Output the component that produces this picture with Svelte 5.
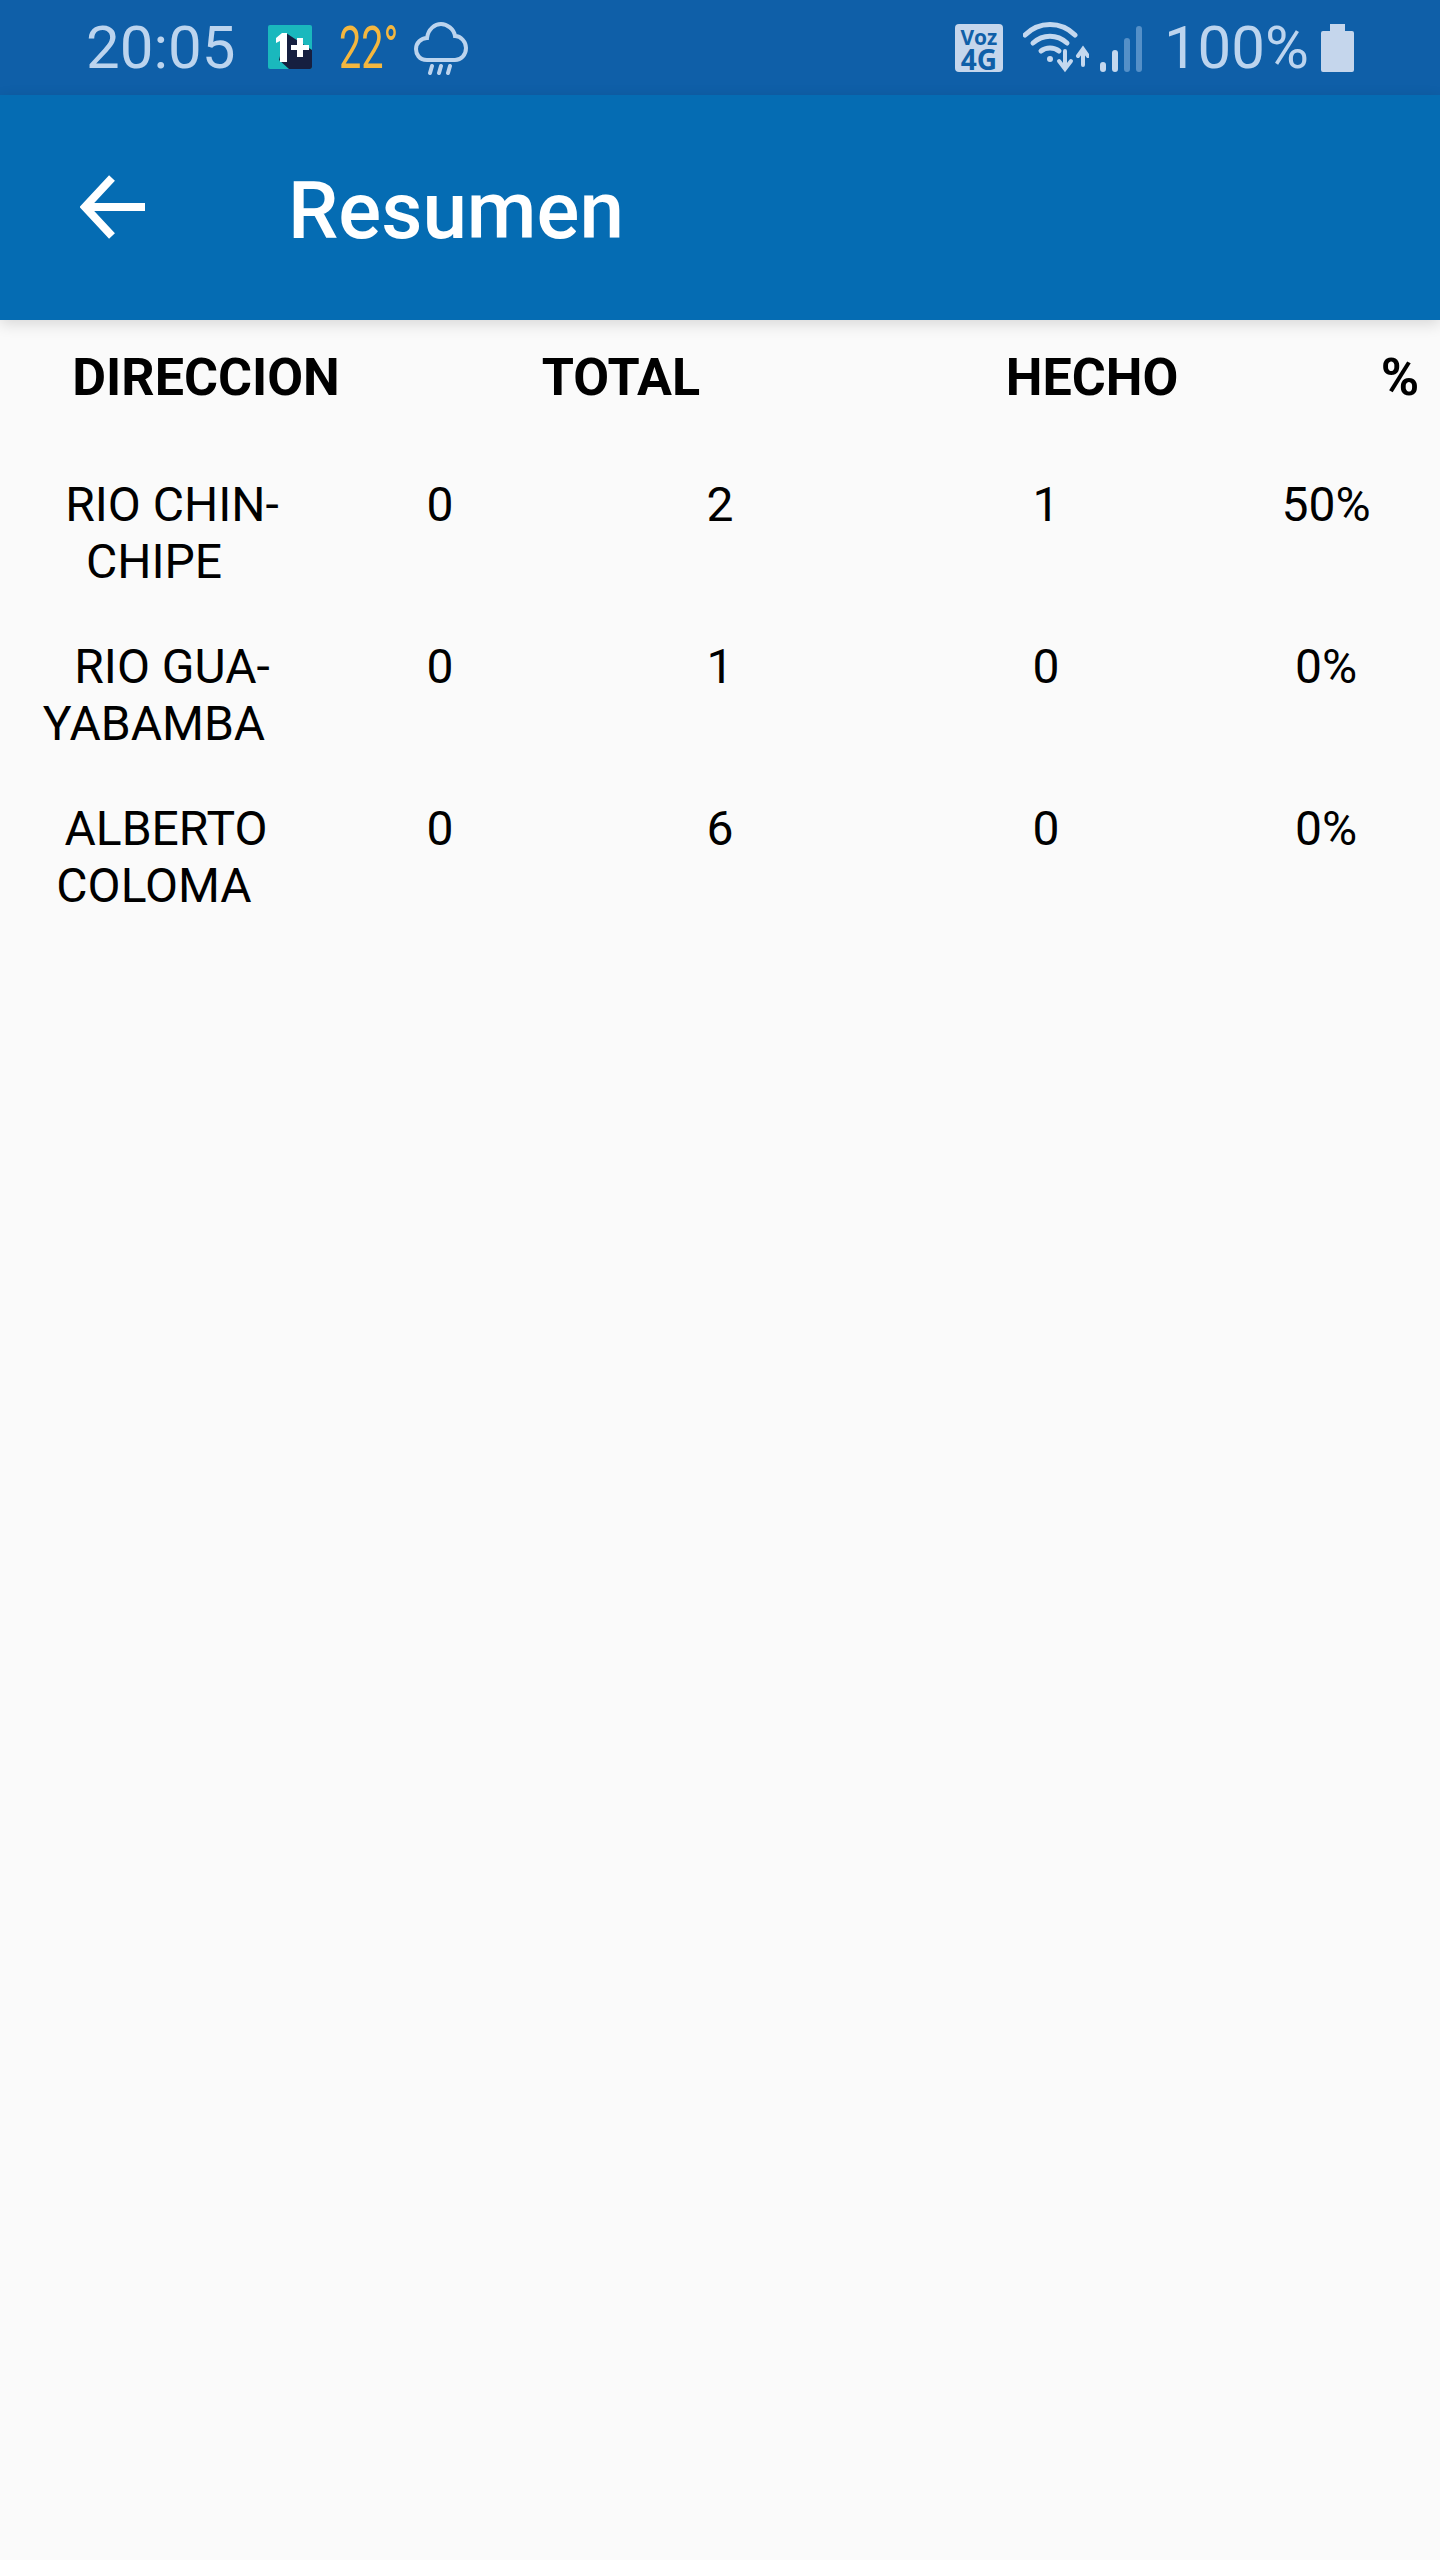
<script>
  const rows = [
    { first: "RIO CHIN-", second: "CHIPE", indent: 36, zero: 0, total: 2, done: 1, pct: "50%" },
    { first: "RIO GUA-", second: "YABAMBA", indent: 36, zero: 0, total: 1, done: 0, pct: "0%" },
    { first: "ALBERTO", second: "COLOMA", indent: 24, zero: 0, total: 6, done: 0, pct: "0%" }
  ];
</script>

<div class="page">
  <div class="status">
    <span class="time">20:05</span>
    <svg class="app-icon" width="44" height="44" viewBox="0 0 44 44">
      <rect width="44" height="44" rx="2" fill="#1ab8bd" />
      <path d="M18 8 L44 25 V42 Q44 44 42 44 H21 L11 35 Z" fill="#161f40" />
      <path d="M8 13 L14 8 H19 V37 H12 V16 L8 18 Z" fill="#fff" />
      <path d="M29 13 H35 V20 H41 V25 H35 V32 H29 V25 H23 V20 H29 Z" fill="#fff" />
    </svg>
    <span class="temp">22°</span>
    <svg class="cloud" width="54" height="54" viewBox="0 0 54 54" fill="none" stroke="#bcd4ee" stroke-width="4" stroke-linecap="round">
      <path d="M13 39 C5 39 2 33 2 28 C2 22 7 17 13 17 C14 8 21 3 27 3 C33 3 40 8 41 15 C47 15 52 21 52 27 C52 34 47 39 41 39 Z" />
      <path d="M18 45 L16 52 M27 45 L25 52 M36 45 L34 52" />
    </svg>

    <div class="spacer"></div>

    <div class="voz"><span>Voz</span><span class="g">4G</span></div>
    <svg class="wifi" width="66" height="52" viewBox="0 0 66 52" fill="none" stroke="#c4d8ef" stroke-linecap="round">
      <path d="M2 13 C16 -1 38 -1 52 13" stroke-width="5" />
      <path d="M10 21 C20 12 34 12 44 21" stroke-width="5" />
      <path d="M18 29 C23 25 31 25 36 29" stroke-width="5" />
      <circle cx="27" cy="37" r="3" fill="#c4d8ef" stroke="none" />
      <path d="M42 29 V43 M36 39 L42 47 L48 39" stroke-width="4" />
      <path d="M60 43 V29 M55 34 L60 27 L65 34" stroke-width="4" />
    </svg>
    <div class="bars">
      <i style="height: 10px"></i>
      <i style="height: 22px"></i>
      <i class="dim" style="height: 34px"></i>
      <i class="dim" style="height: 46px"></i>
    </div>
    <span class="battery-pct">100%</span>
    <svg class="battery" width="33" height="48" viewBox="0 0 33 48">
      <path d="M9 0 H24 V7 H31 Q33 7 33 9 V46 Q33 48 31 48 H2 Q0 48 0 46 V9 Q0 7 2 7 H9 Z" fill="#c5d6ec" />
    </svg>
  </div>

  <header class="appbar">
    <svg class="back" width="65" height="64" viewBox="0 0 65 64" fill="none" stroke="#fff" stroke-width="8">
      <path d="M65 32 H5" />
      <path d="M32 3 L5 32 L32 61" />
    </svg>
    <span class="title">Resumen</span>
  </header>

  <div class="head">
    <span>DIRECCION</span>
    <span>TOTAL</span>
    <span>HECHO</span>
    <span class="pct">%</span>
  </div>

  {#each rows as row}
    <div class="row">
      <div class="name">
        <span class="line" style="padding-left: {row.indent}px">{row.first}</span>
        <span class="line">{row.second}</span>
      </div>
      <div>{row.zero}</div>
      <div>{row.total}</div>
      <div>{row.done}</div>
      <div>{row.pct}</div>
    </div>
  {/each}
</div>

<style>
  :global(body) {
    margin: 0;
    background: #fafafa;
  }
  .page {
    min-height: 2560px;
    background: #fafafa;
    font-family: Roboto, "Liberation Sans", sans-serif;
    color: #000;
  }
  .status {
    height: 95px;
    box-sizing: border-box;
    background: #0f5fa8;
    display: flex;
    align-items: center;
    padding: 0 86px 0 86px;
    color: #bcd4ee;
  }
  .time {
    font-size: 60px;
    line-height: 95px;
  }
  .app-icon {
    margin-left: 33px;
    margin-top: -1px;
  }
  .temp {
    margin-left: 27px;
    font-size: 60px;
    color: #f4b73f;
    width: 54px;
    transform: scaleX(0.66);
    transform-origin: left center;
    white-space: nowrap;
  }
  .cloud {
    margin-left: 21px;
    margin-top: 1px;
  }
  .spacer {
    flex: 1;
  }
  .voz {
    width: 48px;
    height: 48px;
    border-radius: 4px;
    background: #c5d6ec;
    color: #0f5fa8;
    font-weight: 700;
    font-family: "Open Sans", Roboto, sans-serif;
    display: flex;
    flex-direction: column;
    align-items: center;
    line-height: 20px;
    font-size: 21px;
    padding-top: 3px;
    box-sizing: border-box;
  }
  .voz .g {
    font-size: 28px;
    line-height: 24px;
  }
  .wifi {
    margin-left: 20px;
  }
  .bars {
    margin-left: 11px;
    width: 42px;
    height: 46px;
    display: flex;
    align-items: flex-end;
    justify-content: space-between;
    margin-top: 2px;
  }
  .bars i {
    width: 6px;
    border-radius: 3px;
    background: #c4d8ef;
  }
  .bars i.dim {
    background: #5590c8;
  }
  .battery-pct {
    margin-left: 22px;
    font-size: 60px;
    line-height: 95px;
  }
  .battery {
    margin-left: 12px;
  }
  .appbar {
    height: 225px;
    background: #056cb3;
    box-shadow: 0 4px 14px rgba(0, 0, 0, 0.14);
    display: flex;
    align-items: center;
    color: #fff;
    position: relative;
    padding-left: 80px;
  }
  .back {
    margin-top: -2px;
  }
  .title {
    margin-left: 143px;
    font-size: 80px;
    font-weight: 500;
    margin-top: 6px;
  }
  .head {
    display: grid;
    grid-template-columns: 412px 418px 524px 92px;
    height: 114px;
    align-items: center;
    text-align: center;
    font-size: 52px;
    font-weight: 700;
    margin-bottom: 42px;
  }
  .row {
    display: grid;
    grid-template-columns: 308px 264px 296px 356px 204px;
    font-size: 48px;
    line-height: 57px;
    text-align: center;
    padding-bottom: 48px;
  }
  .line {
    display: block;
    white-space: nowrap;
  }
</style>
